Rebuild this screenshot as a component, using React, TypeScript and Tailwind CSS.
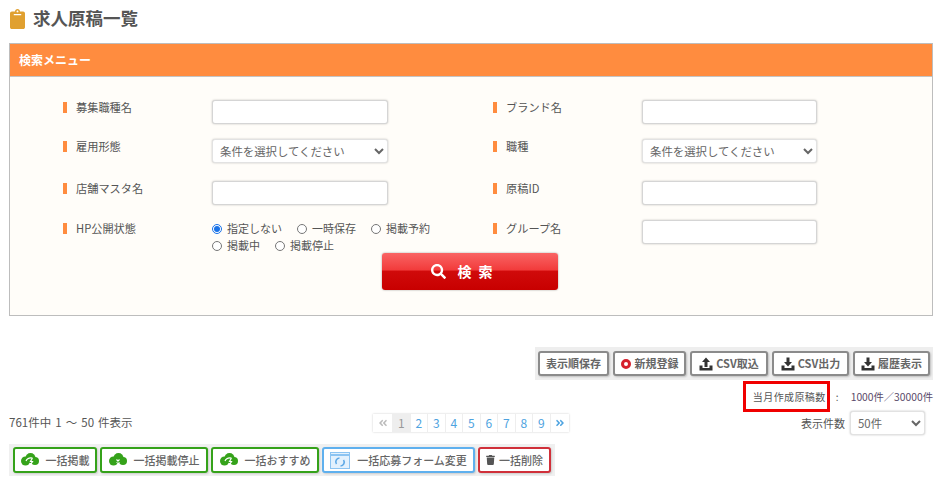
import { FaAngleDoubleLeft, FaAngleDoubleRight, FaClipboard, FaSearch, FaTrash } from "react-icons/fa";

const font = { fontFamily: '"Noto Sans CJK JP", "Noto Sans", sans-serif' };

const inputClass =
  "block h-[24px] bg-white rounded-[3px] border border-[#d5d5d5] shadow-[0_0_2px_rgba(0,0,0,0.25)]";

const selectClass =
  "block h-[24px] bg-white rounded-[3px] border border-[#e2e2e2] shadow-[0_0_2px_rgba(0,0,0,0.25)] text-[11.4px] text-[#666] pl-[3px]";

const Label = ({ text, top = "mt-[2px]" }: { text: string; top?: string }) => (
  <div className={`w-[149px] shrink-0 flex items-center h-[11px] ${top}`}>
    <span className="w-[4px] h-[11px] bg-[#ff8c3f] mr-[9px]" />
    <span className="text-[11.2px] text-[#555] leading-none">{text}</span>
  </div>
);

const Radio = ({ text, checked }: { text: string; checked?: boolean }) => (
  <label className="flex items-center h-[17px] mr-[15px] text-[11px] text-[#555] leading-none">
    <input type="radio" name="hp" defaultChecked={checked} className="w-[10px] h-[10px] mr-[5px] accent-[#1a73e8]" />
    {text}
  </label>
);

const UploadIcon = ({ down }: { down?: boolean }) => (
  <svg width="14" height="14" viewBox="0 0 14 14" className="mr-[3px] shrink-0" fill="#333">
    <path d="M0.5 8.5h3v2.5h7V8.5h3V13.5H0.5z" />
    {down ? <path d="M5.5 0.5h3v4.5H11L7 9.5 3 5h2.5z" /> : <path d="M5.5 10h3V5H11L7 0.5 3 5h2.5z" />}
  </svg>
);

const CloudIcon = ({ stop }: { stop?: boolean }) => (
  <svg width="18" height="14" viewBox="0 0 18 14" className="shrink-0" fill="#35a21a">
    <circle cx="4.5" cy="8" r="4.5" />
    <circle cx="9.5" cy="5" r="5" />
    <circle cx="14" cy="8" r="4" />
    {stop ? (
      <path d="M7.5 6.5l3 3m0-3l-3 3" stroke="#fff" strokeWidth="1.1" fill="none" />
    ) : (
      <path d="M5 8c1-2.5 3.5-3.5 6.5-3M11.5 5L9.5 8.5h2L8 14" stroke="#fff" strokeWidth="1.2" fill="none" />
    )}
  </svg>
);

const FormIcon = () => (
  <svg width="20" height="17" viewBox="0 0 20 17" className="shrink-0" fill="none">
    <rect x="0.5" y="0.5" width="19" height="16" fill="#e3f1fd" stroke="#8cc4f2" />
    <path d="M0 3h20" stroke="#8cc4f2" strokeWidth="2" />
    <path d="M6.5 12a3.8 3.8 0 0 1 3-6M13.5 8a3.8 3.8 0 0 1-3 6" stroke="#5fa9e6" strokeWidth="1.6" />
  </svg>
);

const ToolButton = ({ children, w }: { children: React.ReactNode; w: string }) => (
  <button
    className={`${w} h-[25px] flex items-center justify-center bg-white rounded-[3px] border-2 border-[#8b8b8b] shadow-[1px_1px_2px_rgba(0,0,0,0.2)] text-[11px] font-bold text-[#666] whitespace-nowrap`}
  >
    {children}
  </button>
);

const BulkButton = ({ children, w, border }: { children: React.ReactNode; w: string; border: string }) => (
  <button
    className={`${w} ${border} h-[26px] flex items-center justify-center gap-[7px] bg-white rounded-[3px] border-2 shadow-[1px_1px_2px_rgba(0,0,0,0.15)] text-[11px] font-medium text-[#666] whitespace-nowrap`}
  >
    {children}
  </button>
);

const pages = ["1", "2", "3", "4", "5", "6", "7", "8", "9"];

export default function App() {
  return (
    <div className="w-[952px] h-[495px] bg-white overflow-hidden pl-[9px] pr-[19px] pt-[9px]" style={font}>
      {/* Title */}
      <div className="flex items-center h-[20px]">
        <FaClipboard className="w-[17px] h-[20px] text-[#e0a030]" />
        <h1 className="ml-[7px] -mt-[3px] text-[17.5px] font-bold text-[#555] leading-none">求人原稿一覧</h1>
      </div>

      {/* Search panel */}
      <section className="mt-[14px] h-[273px] border border-[#bdbdbd] bg-[#fffdf9]">
        <div className="h-[32px] bg-[#ff8c3f] flex items-center pl-[9px] text-[12px] font-bold text-white">
          検索メニュー
        </div>
        <div className="border-t border-[#c4c4c4] pt-[23px] pl-[53px]">
          <div className="grid grid-cols-[430px_1fr] grid-rows-[39px_42px_39px_33px]">
            <div className="flex">
              <Label text="募集職種名" />
              <input className={`${inputClass} w-[176px]`} />
            </div>
            <div className="flex">
              <Label text="ブランド名" />
              <input className={`${inputClass} w-[175px]`} />
            </div>
            <div className="flex">
              <Label text="雇用形態" />
              <select className={`${selectClass} w-[176px]`}>
                <option>条件を選択してください</option>
              </select>
            </div>
            <div className="flex">
              <Label text="職種" />
              <select className={`${selectClass} w-[175px]`}>
                <option>条件を選択してください</option>
              </select>
            </div>
            <div className="flex">
              <Label text="店舗マスタ名" />
              <input className={`${inputClass} w-[176px]`} />
            </div>
            <div className="flex">
              <Label text="原稿ID" />
              <input className={`${inputClass} w-[175px]`} />
            </div>
            <div className="flex">
              <Label text="HP公開状態" top="mt-[3px]" />
              <div className="w-[240px] flex flex-wrap content-start">
                <Radio text="指定しない" checked />
                <Radio text="一時保存" />
                <Radio text="掲載予約" />
                <Radio text="掲載中" />
                <Radio text="掲載停止" />
              </div>
            </div>
            <div className="flex">
              <Label text="グループ名" top="mt-[3px]" />
              <input className={`${inputClass} w-[175px]`} />
            </div>
          </div>
          <button className="ml-[319px] w-[176px] h-[37px] flex items-center justify-center gap-[12px] pr-[10px] rounded-[3px] bg-[linear-gradient(#f96464_0%,#f23c3c_45%,#d00a0a_50%,#c80000_100%)] shadow-[0_0_2px_rgba(0,0,0,0.4)] text-white text-[14px] font-bold tracking-[0.5em]">
            <FaSearch className="w-[15px] h-[15px]" />
            検索
          </button>
        </div>
      </section>

      {/* Toolbar */}
      <div className="mt-[31px] ml-[526px] h-[33px] w-[398px] bg-[#eeeeee] flex items-center justify-center gap-[4px]">
        <ToolButton w="w-[71px]">表示順保存</ToolButton>
        <ToolButton w="w-[73px]">
          <span className="w-[10px] h-[10px] rounded-full border-[3px] border-[#d6202c] mr-[4px]" />
          新規登録
        </ToolButton>
        <ToolButton w="w-[78px]">
          <UploadIcon />
          CSV取込
        </ToolButton>
        <ToolButton w="w-[77px]">
          <UploadIcon down />
          CSV出力
        </ToolButton>
        <ToolButton w="w-[77px]">
          <UploadIcon down />
          履歴表示
        </ToolButton>
      </div>

      {/* Monthly count */}
      <div className="flex justify-end items-center mt-[1px] h-[31px] text-[10px] text-[#555]">
        <div className="w-[87px] h-[31px] border-[3px] border-[#f00000] flex items-center justify-end pr-[1px] tracking-[0.04em] whitespace-nowrap">
          当月作成原稿数
        </div>
        <span className="ml-[6px] w-[15px]">:</span>
        <span className="text-[#5a4a6a] text-[10.3px] whitespace-nowrap">1000件／30000件</span>
      </div>

      {/* Paging */}
      <div className="relative flex items-center h-[24px] -mt-[1px]">
        <span className="w-[364px] text-[11.5px] text-[#555] [word-spacing:1.5px]">761件中 1 〜 50 件表示</span>
        <div className="flex h-[18px] shadow-[0_0_2px_rgba(0,0,0,0.2)]">
          <span className="w-[20px] bg-white text-[#bbb] flex items-center justify-center border-r border-[#eeeeee]">
            <FaAngleDoubleLeft className="w-[10px] h-[10px]" />
          </span>
          {pages.map((p, i) => (
            <span
              key={p}
              className={`${i === 0 ? "bg-[#eeeeee] text-[#999]" : "bg-white text-[#4ea3e0]"} w-[17.5px] text-[12px] flex items-center justify-center border-r border-[#eeeeee]`}
            >
              {p}
            </span>
          ))}
          <span className="w-[18px] bg-white text-[#4ea3e0] flex items-center justify-center">
            <FaAngleDoubleRight className="w-[10px] h-[10px]" />
          </span>
        </div>
        <span className="ml-auto mr-[5px] text-[11px] text-[#555]">表示件数</span>
        <select className={`${selectClass} w-[75px] mr-[8px]`}>
          <option>50件</option>
        </select>
      </div>

      {/* Bulk actions */}
      <div className="mt-[9px] w-[546px] h-[32px] bg-[#f0f0f0] flex items-center justify-center gap-[3px]">
        <BulkButton w="w-[84px]" border="border-[#35a21a]">
          <CloudIcon />
          一括掲載
        </BulkButton>
        <BulkButton w="w-[108px]" border="border-[#35a21a]">
          <CloudIcon stop />
          一括掲載停止
        </BulkButton>
        <BulkButton w="w-[108px]" border="border-[#35a21a]">
          <CloudIcon />
          一括おすすめ
        </BulkButton>
        <BulkButton w="w-[153px]" border="border-[#5fb0ee]">
          <FormIcon />
          一括応募フォーム変更
        </BulkButton>
        <BulkButton w="w-[73px]" border="border-[#d0303a]">
          <FaTrash className="w-[9px] h-[10px] text-[#555] -mr-[3px]" />
          一括削除
        </BulkButton>
      </div>
    </div>
  );
}
